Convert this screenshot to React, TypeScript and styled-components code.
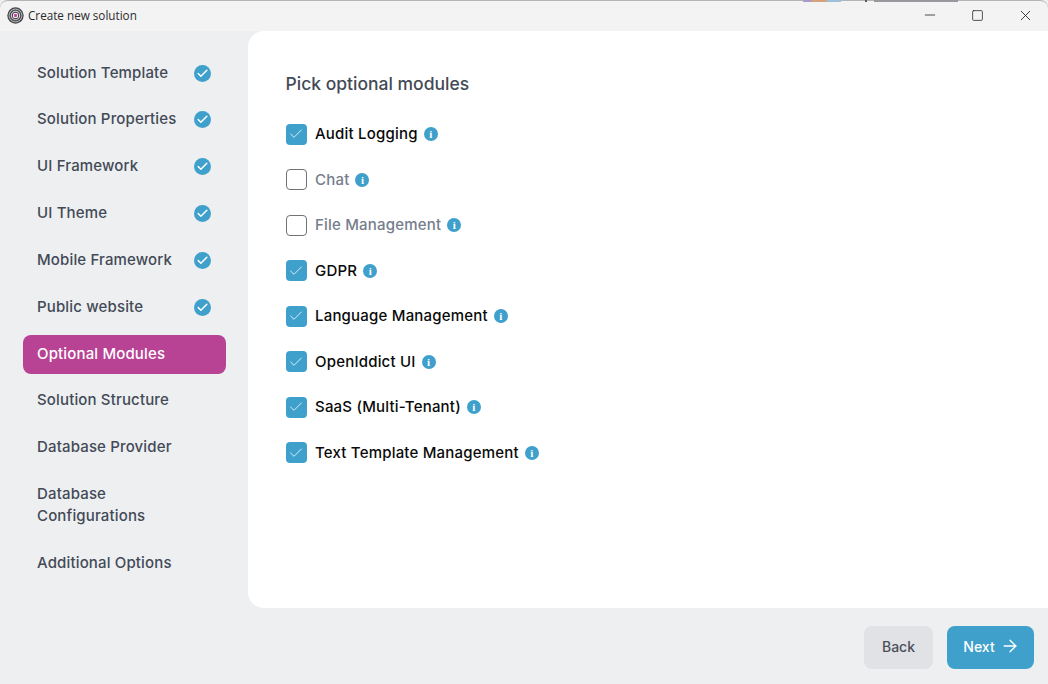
import React from 'react';
import styled, { createGlobalStyle } from 'styled-components';
import { ArrowRight, Check, Minus, Square, X } from 'lucide-react';

const GlobalStyle = createGlobalStyle`
  html, body {
    margin: 0;
    padding: 0;
    height: 100%;
    background: #eeeff1;
    overflow: hidden;
  }
  * { box-sizing: border-box; }
`;

const Window = styled.div`
  position: relative;
  width: 1048px;
  height: 684px;
  display: flex;
  flex-direction: column;
  background: #eeeff1;
  font-family: Inter, "Liberation Sans", sans-serif;
`;

// sliver of the desktop showing behind the window's top edge
const DesktopPeek = styled.div`
  position: absolute;
  top: 0;
  left: 803px;
  width: 155px;
  height: 2px;
  background: linear-gradient(
    to right,
    #a99ac8 0 9px,
    #d6a27c 9px 24px,
    #9cc0dc 24px 38px,
    transparent 38px 62px,
    #55585c 62px 64px,
    transparent 64px 71px,
    #97999c 71px 155px
  );
`;

const TitleBar = styled.div`
  height: 31px;
  flex: none;
  display: flex;
  align-items: center;
  background: #f3f3f3;
  border-top: 1px solid #b4b4b4;
  border-top-left-radius: 8px;
  border-top-right-radius: 8px;
  padding: 0 0 2px 7px;
`;

const AppTitle = styled.span`
  margin-left: 4px;
  font-family: "Open Sans", sans-serif;
  font-size: 11.7px;
  color: #2b2b2b;
`;

const WindowControls = styled.div`
  margin-left: auto;
  display: flex;
  align-items: center;
  padding-right: 14px;
  gap: 33px;
  color: #222;
`;

const Body = styled.div`
  flex: 1;
  display: flex;
  min-height: 0;
`;

const Sidebar = styled.nav`
  width: 248px;
  flex: none;
  padding: 22.5px 22px 0 23px;
  display: flex;
  flex-direction: column;
  gap: 7.85px;
`;

const NavItem = styled.div<{ $active?: boolean }>`
  display: flex;
  align-items: center;
  justify-content: space-between;
  padding: 8px 15px 9px 14px;
  border-radius: 8px;
  font-size: 15px;
  letter-spacing: 0.15px;
  line-height: 22px;
  font-weight: 500;
  color: ${p => (p.$active ? '#ffffff' : '#434a57')};
  background: ${p => (p.$active ? '#b84294' : 'transparent')};
`;

const NavLabel = styled.span<{ $narrow?: boolean }>`
  max-width: ${p => (p.$narrow ? '130px' : 'none')};
`;

const DoneBadge = styled.span`
  width: 17px;
  height: 17px;
  margin-top: 1px;
  border-radius: 50%;
  background: #3fa0cc;
  color: #fff;
  display: flex;
  align-items: center;
  justify-content: center;
`;

const Content = styled.main`
  flex: 1;
  height: 577px;
  background: #fff;
  border-radius: 16px 0 0 16px;
  padding: 41px 37.5px 0;
`;

const Heading = styled.h2`
  margin: 0 0 27.5px;
  font-size: 17.5px;
  line-height: 24px;
  font-weight: 500;
  color: #434a57;
`;

const ModuleList = styled.div`
  display: flex;
  flex-direction: column;
  gap: 24.5px;
`;

const ModuleRow = styled.label`
  display: flex;
  align-items: center;
  height: 21px;
`;

const CheckBox = styled.span<{ $checked: boolean }>`
  width: 21px;
  height: 21px;
  flex: none;
  border-radius: 4px;
  display: flex;
  align-items: center;
  justify-content: center;
  color: #fff;
  background: ${p => (p.$checked ? '#3fa0cc' : '#fff')};
  border: ${p => (p.$checked ? 'none' : '1px solid #6f7276')};
`;

const ModuleName = styled.span<{ $checked: boolean }>`
  margin: -1px 0 0 8.5px;
  font-size: 15px;
  letter-spacing: 0.2px;
  font-weight: 500;
  color: ${p => (p.$checked ? '#0a0a0a' : '#767d8c')};
`;

const InfoIcon = styled.span`
  margin-left: 6px;
  width: 14px;
  height: 14px;
  flex: none;
  border-radius: 50%;
  background: #3fa0cc;
  color: #fff;
  display: flex;
  align-items: center;
  justify-content: center;
  font-family: "Liberation Serif", serif;
  font-weight: 700;
  font-size: 11px;
  line-height: 14px;
`;

const Footer = styled.div`
  height: 76px;
  flex: none;
  display: flex;
  justify-content: flex-end;
  align-items: flex-start;
  gap: 13.5px;
  padding: 18px 14.5px 0 0;
`;

const Button = styled.button<{ $primary?: boolean }>`
  height: 43px;
  width: ${p => (p.$primary ? '87px' : '69px')};
  padding: ${p => (p.$primary ? '0 0 3px 3px' : '0 0 3px 0')};
  border: none;
  border-radius: 8px;
  display: flex;
  align-items: center;
  justify-content: center;
  gap: 5px;
  font-family: inherit;
  font-size: 14px;
  font-weight: 500;
  background: ${p => (p.$primary ? '#3fa0cc' : '#e1e2e6')};
  color: ${p => (p.$primary ? '#fff' : '#4b4f5a')};
`;

const steps = [
  { label: 'Solution Template', done: true },
  { label: 'Solution Properties', done: true },
  { label: 'UI Framework', done: true },
  { label: 'UI Theme', done: true },
  { label: 'Mobile Framework', done: true },
  { label: 'Public website', done: true },
  { label: 'Optional Modules', active: true },
  { label: 'Solution Structure' },
  { label: 'Database Provider' },
  { label: 'Database Configurations', narrow: true },
  { label: 'Additional Options' },
];

const modules = [
  { name: 'Audit Logging', checked: true },
  { name: 'Chat', checked: false },
  { name: 'File Management', checked: false },
  { name: 'GDPR', checked: true },
  { name: 'Language Management', checked: true },
  { name: 'OpenIddict UI', checked: true },
  { name: 'SaaS (Multi-Tenant)', checked: true },
  { name: 'Text Template Management', checked: true },
];

const Logo = () => (
  <svg width="17" height="17" viewBox="0 0 17 17" fill="none">
    <circle cx="8.5" cy="8.5" r="8.2" fill="#4a4a4e" />
    <circle cx="8.5" cy="8.5" r="6.4" stroke="#b9b9bd" strokeWidth="1" />
    <circle cx="8.5" cy="8.5" r="4.2" stroke="#d2d2d5" strokeWidth="1.1" />
    <rect x="6" y="6" width="5" height="5" rx="1.5" fill="#f1e6ee" />
    <rect x="7" y="7" width="3" height="3" rx="1" fill="#c2479c" />
  </svg>
);

export default function App() {
  return (
    <Window>
      <GlobalStyle />
      <TitleBar>
        <Logo />
        <AppTitle>Create new solution</AppTitle>
        <WindowControls>
          <Minus size={16} strokeWidth={1.2} />
          <Square size={13} strokeWidth={1.4} />
          <X size={17} strokeWidth={1.2} />
        </WindowControls>
      </TitleBar>
      <DesktopPeek />
      <Body>
        <Sidebar>
          {steps.map(step => (
            <NavItem key={step.label} $active={step.active}>
              <NavLabel $narrow={step.narrow}>{step.label}</NavLabel>
              {step.done && (
                <DoneBadge>
                  <Check size={13} strokeWidth={2.8} />
                </DoneBadge>
              )}
            </NavItem>
          ))}
        </Sidebar>
        <Content>
          <Heading>Pick optional modules</Heading>
          <ModuleList>
            {modules.map(mod => (
              <ModuleRow key={mod.name}>
                <CheckBox $checked={mod.checked}>
                  {mod.checked && <Check size={16} strokeWidth={1.2} />}
                </CheckBox>
                <ModuleName $checked={mod.checked}>{mod.name}</ModuleName>
                <InfoIcon>i</InfoIcon>
              </ModuleRow>
            ))}
          </ModuleList>
        </Content>
      </Body>
      <Footer>
        <Button>Back</Button>
        <Button $primary>
          Next
          <ArrowRight size={20} strokeWidth={1.6} />
        </Button>
      </Footer>
    </Window>
  );
}
